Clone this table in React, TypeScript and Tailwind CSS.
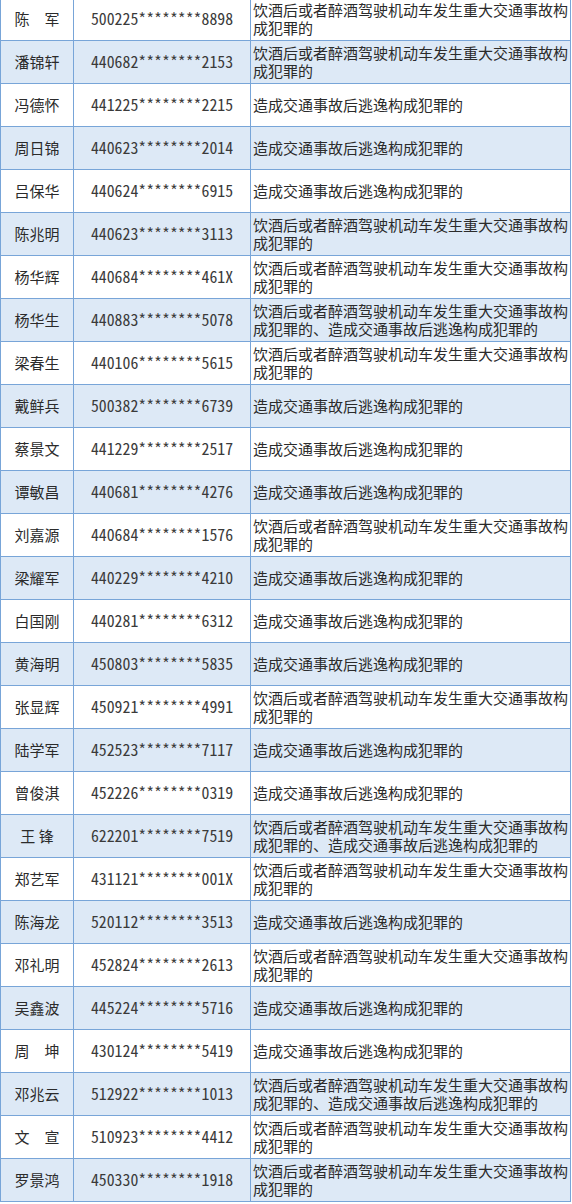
import React from "react";

const A = "饮酒后或者醉酒驾驶机动车发生重大交通事故构\n成犯罪的";
const B = "造成交通事故后逃逸构成犯罪的";
const C = "饮酒后或者醉酒驾驶机动车发生重大交通事故构\n成犯罪的、造成交通事故后逃逸构成犯罪的";

const rows: [string, string, string][] = [
  ["陈　军", "500225********8898", A],
  ["潘锦轩", "440682********2153", A],
  ["冯德怀", "441225********2215", B],
  ["周日锦", "440623********2014", B],
  ["吕保华", "440624********6915", B],
  ["陈兆明", "440623********3113", A],
  ["杨华辉", "440684********461X", A],
  ["杨华生", "440883********5078", C],
  ["梁春生", "440106********5615", A],
  ["戴鲜兵", "500382********6739", B],
  ["蔡景文", "441229********2517", B],
  ["谭敏昌", "440681********4276", B],
  ["刘嘉源", "440684********1576", A],
  ["梁耀军", "440229********4210", B],
  ["白国刚", "440281********6312", B],
  ["黄海明", "450803********5835", B],
  ["张显辉", "450921********4991", A],
  ["陆学军", "452523********7117", B],
  ["曾俊淇", "452226********0319", B],
  ["王 锋", "622201********7519", C],
  ["郑艺军", "431121********001X", A],
  ["陈海龙", "520112********3513", B],
  ["邓礼明", "452824********2613", A],
  ["吴鑫波", "445224********5716", B],
  ["周　坤", "430124********5419", B],
  ["邓兆云", "512922********1013", C],
  ["文　宣", "510923********4412", A],
  ["罗景鸿", "450330********1918", A],
];

export default function App() {
  return (
    <div className="w-[572px] h-[1204px] overflow-hidden bg-white">
      <div
        className="-mt-[2px] w-[571px] grid grid-cols-[73px_177px_320px] border-l border-[#78a5d8] text-[#2b2b2b]"
        style={{ fontFamily: '"Noto Sans CJK SC", "Noto Sans", sans-serif' }}
      >
        {rows.map(([name, id, desc], i) => {
          const bg = i % 2 === 1 ? "bg-[#dde9f6]" : "bg-white";
          return (
            <React.Fragment key={i}>
              <div className={`${bg} h-[43px] border-r border-b border-[#78a5d8] flex items-center justify-center text-[15px] whitespace-pre`}>
                {name}
              </div>
              <div
                className={`${bg} h-[43px] border-r border-b border-[#78a5d8] flex items-center justify-center text-[15.8px] leading-[20px] text-[#3a3a3a] whitespace-nowrap`}
                style={{ fontFamily: '"Noto Sans Mono CJK SC", "Liberation Mono", monospace' }}
              >
                {id}
              </div>
              <div className={`${bg} h-[43px] border-r border-b border-[#78a5d8] flex items-center pl-[2px] text-[15px] leading-[18px]`}>
                <p className="whitespace-pre-line">{desc}</p>
              </div>
            </React.Fragment>
          );
        })}
      </div>
    </div>
  );
}
